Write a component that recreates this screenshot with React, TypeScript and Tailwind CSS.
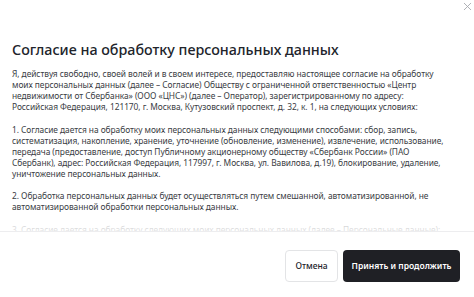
import { X } from "lucide-react";

const paragraphs = [
  [
    "Я, действуя свободно, своей волей и в своем интересе, предоставляю настоящее согласие на обработку",
    "моих персональных данных (далее – Согласие) Обществу с ограниченной ответственностью «Центр",
    "недвижимости от Сбербанка» (ООО «ЦНС») (далее – Оператор), зарегистрированному по адресу:",
    "Российская Федерация, 121170, г. Москва, Кутузовский проспект, д. 32, к. 1, на следующих условиях:",
  ],
  [
    "1. Согласие дается на обработку моих персональных данных следующими способами: сбор, запись,",
    "систематизация, накопление, хранение, уточнение (обновление, изменение), извлечение, использование,",
    "передача (предоставление, доступ Публичному акционерному обществу «Сбербанк России» (ПАО",
    "Сбербанк), адрес: Российская Федерация, 117997, г. Москва, ул. Вавилова, д.19), блокирование, удаление,",
    "уничтожение персональных данных.",
  ],
  [
    "2. Обработка персональных данных будет осуществляться путем смешанной, автоматизированной, не",
    "автоматизированной обработки персональных данных.",
  ],
  [
    "3. Согласие дается на обработку следующих моих персональных данных (далее – Персональные данные):",
    "фамилия, имя, отчество, номер телефона, адрес электронной почты.",
  ],
];

export default function App() {
  return (
    <div className="relative flex h-[297px] w-[474px] flex-col overflow-hidden bg-white font-['Noto_Sans',sans-serif] text-[#21242b]">
      <button className="absolute right-0 top-0 text-[#a4a6ab]" aria-label="Закрыть">
        <X className="h-[13px] w-[13px]" strokeWidth={1.6} />
      </button>

      <h2 className="px-3 pt-[40px] text-[14.3px] font-medium leading-[20px]">
        Согласие на обработку персональных данных
      </h2>

      <div className="relative mt-[8px] h-[163px] overflow-hidden pl-3">
        {paragraphs.map((lines, i) => (
          <p key={i} className="mb-[11.5px] text-[8.4px] leading-[11px] tracking-[-0.05px] text-[#3a3d44]">
            {lines.map((line, j) => (
              <span key={j} className="block whitespace-nowrap">
                {line}
              </span>
            ))}
          </p>
        ))}
        <div className="absolute inset-x-0 bottom-0 h-[12px] bg-gradient-to-b from-white/70 to-white/85" />
      </div>

      <div className="flex flex-1 items-start justify-end gap-[5px] border-t border-[#ededef] pr-[14px] pt-[18px]">
        <button className="h-[32px] w-[53px] rounded-[4px] border border-[#e3e4e6] bg-white text-[8.5px] font-medium text-[#21242b]">
          Отмена
        </button>
        <button className="h-[32px] w-[117px] rounded-[4px] bg-[#1f2025] text-[8.5px] font-semibold text-white">
          Принять и продолжить
        </button>
      </div>
    </div>
  );
}
